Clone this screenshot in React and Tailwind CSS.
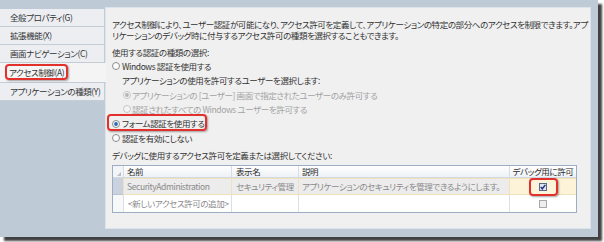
import React from 'react';

function Radio({ checked = false, disabled = false }) {
  return (
    <svg width="8" height="8" viewBox="0 0 8 8" className="shrink-0">
      <circle cx="4" cy="4" r="3.5" fill={disabled ? '#f5f5f5' : '#fbfbfb'} stroke={disabled ? '#c6c6c6' : '#8c8d8e'} />
      {checked && <circle cx="4" cy="4" r="1.9" fill={disabled ? '#b4b4b4' : '#2c6cb3'} />}
    </svg>
  );
}

function CheckBox({ checked = false }) {
  return (
    <svg width="8" height="8" viewBox="0 0 8 8">
      <rect x="0.5" y="0.5" width="7" height="7" fill={checked ? '#dce4f4' : '#eeeeee'} stroke={checked ? '#56698d' : '#a8a8a8'} />
      {checked && <path d="M1.7 4.1 L3.3 5.8 L6.3 1.9" fill="none" stroke="#22307a" strokeWidth="1.4" />}
    </svg>
  );
}

function Tab({ label }) {
  return (
    <div className="h-[18px] flex items-center pl-[10px] bg-[#eceef2] border-b border-r border-[#c4ccd6] whitespace-nowrap">
      {label}
    </div>
  );
}

export default function App() {
  return (
    <div className="w-[604px] h-[242px] bg-white overflow-hidden font-['Noto_Sans_CJK_JP',sans-serif] [font-feature-settings:'palt'] text-[8.5px] tracking-[-0.4px] leading-none text-[#333]">
      <div className="w-[598px] h-[237px] bg-[#bfcad7] shadow-[4px_4px_2px_rgba(0,0,0,0.75)] flex">
        {/* left navigation */}
        <div className="w-[105px] pt-[9px] flex flex-col">
          <Tab label="全般プロパティ(G)" />
          <Tab label="拡張機能(X)" />
          <Tab label="画面ナビゲーション(C)" />
          <div className="relative z-10 -mr-px h-[20px] flex items-center pl-[9px] bg-[#f4f4f4] border-b border-[#c4ccd6] whitespace-nowrap">
            アクセス制御(A)
            <span className="absolute left-[5px] top-[1px] w-[63px] h-[16px] rounded-[4px] border-2 border-[#e2302c] shadow-[1px_1px_2px_rgba(0,0,0,0.35)]" />
          </div>
          <Tab label="アプリケーションの種類(Y)" />
        </div>

        {/* main panel */}
        <div className="mt-[7px] w-[486px] h-[222px] bg-[#f0f0f0] border border-[#dde3ea] pl-[6px] pt-[11px]">
          <div className="leading-[10.5px] whitespace-nowrap">
            <div>アクセス制御により、ユーザー認証が可能になり、アクセス許可を定義して、アプリケーションの特定の部分へのアクセスを制限できます。アプ</div>
            <div>リケーションのデバッグ時に付与するアクセス許可の種類を選択することもできます。</div>
          </div>

          <div className="mt-[5px] h-[14.3px] flex items-center">使用する認証の種類の選択:</div>
          <div className="h-[14.3px] flex items-center gap-[2px]">
            <Radio />
            <span>Windows 認証を使用する</span>
          </div>
          <div className="h-[14.3px] flex items-center pl-[10px]">アプリケーションの使用を許可するユーザーを選択します:</div>
          <div className="h-[14.3px] flex items-center gap-[1px] pl-[11px] text-[#a3a3a3]">
            <Radio checked disabled />
            <span>アプリケーションの [ユーザー] 画面で指定されたユーザーのみ許可する</span>
          </div>
          <div className="h-[14.3px] flex items-center gap-[1px] pl-[11px] text-[#a3a3a3]">
            <Radio disabled />
            <span>認証されたすべての Windows ユーザーを許可する</span>
          </div>
          <div className="relative h-[14.3px] flex items-center gap-[2px]">
            <Radio checked />
            <span>フォーム認証を使用する</span>
            <span className="absolute -left-[5px] -top-[2px] w-[100px] h-[17px] rounded-[4px] border-2 border-[#e2302c] shadow-[1px_1px_2px_rgba(0,0,0,0.35)]" />
          </div>
          <div className="h-[14.3px] flex items-center gap-[2px]">
            <Radio />
            <span>認証を有効にしない</span>
          </div>

          <div className="mt-[3px] h-[14px] flex items-center">デバッグに使用するアクセス許可を定義または選択してください:</div>

          {/* permissions grid */}
          <div className="mt-[3px] w-[465px] border border-[#9dadc3] bg-white">
            <div className="flex h-[12px] bg-gradient-to-b from-white to-[#eef1f5] border-b border-[#d3d9e1] text-[#2c2c2c]">
              <div className="relative w-[10px] bg-[#f2f4f7]">
                <svg width="4" height="4" viewBox="0 0 4 4" className="absolute left-[4px] bottom-[1px]">
                  <path d="M4 0 L4 4 L0 4 Z" fill="#b7bfcb" />
                </svg>
              </div>
              <div className="w-[108px] border-l border-[#d7dde5] pl-[3px] flex items-center">名前</div>
              <div className="w-[67px] border-l border-[#d7dde5] pl-[4px] flex items-center">表示名</div>
              <div className="w-[211px] border-l border-[#d7dde5] pl-[3px] flex items-center">説明</div>
              <div className="w-[67px] border-l border-[#d7dde5] flex items-center justify-center">デバッグ用に許可</div>
            </div>

            <div className="flex h-[17px] text-[#8a8a8a]">
              <div className="w-[10px] bg-[#c9d2de] border-b border-[#b9c3d1]" />
              <div className="w-[108px] bg-[#ececec] border-y border-l border-[#efe1bb] pl-[3px] flex items-center">SecurityAdministration</div>
              <div className="w-[67px] bg-[#ececec] border-y border-l border-[#efe1bb] pl-[4px] flex items-center whitespace-nowrap">セキュリティ管理</div>
              <div className="w-[211px] bg-[#ececec] border-y border-l border-[#efe1bb] pl-[3px] flex items-center whitespace-nowrap">アプリケーションのセキュリティを管理できるようにします。</div>
              <div className="relative w-[67px] bg-[#fcf3d9] border-y border-l border-[#efe1bb] flex items-center justify-center">
                <CheckBox checked />
                <span className="absolute left-[19px] -top-px w-[29px] h-[18px] rounded-[4px] border-2 border-[#e2302c] shadow-[1px_1px_2px_rgba(0,0,0,0.35)]" />
              </div>
            </div>

            <div className="flex h-[17px] text-[#8a8a8a]">
              <div className="w-[10px] bg-[#f7f8fa]" />
              <div className="w-[108px] border-l border-[#dcdfe4] pl-[4px] flex items-center whitespace-nowrap">&lt;新しいアクセス許可の追加&gt;</div>
              <div className="w-[67px] border-l border-[#dcdfe4]" />
              <div className="w-[211px] border-l border-[#dcdfe4]" />
              <div className="w-[67px] border-l border-[#dcdfe4] flex items-center justify-center">
                <CheckBox />
              </div>
            </div>
          </div>
        </div>
      </div>
    </div>
  );
}
